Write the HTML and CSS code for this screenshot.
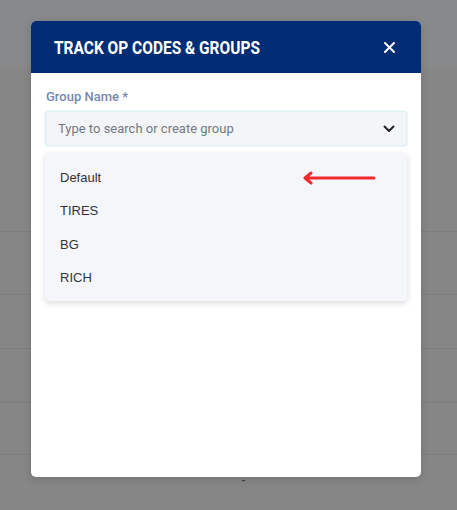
FILE: index.html
```html
<!DOCTYPE html>
<html lang="en">
<head>
    <meta charset="UTF-8">
    <meta name="viewport" content="width=device-width, initial-scale=1.0">
    <title>Track Op Codes &amp; Groups</title>
    <link rel="stylesheet" href="styles.css">
</head>
<body>
<div class="page">
    <div class="topbar"></div>
    <div class="rows">
        <div class="row row-first"></div>
        <div class="row"></div>
        <div class="row"></div>
        <div class="row"></div>
        <div class="row"><span class="cell-dash">-</span></div>
    </div>
</div>

<div class="modal">
    <div class="modal-header">
        <h2>TRACK OP CODES &amp; GROUPS</h2>
        <button class="close-btn" aria-label="Close">
            <svg width="11" height="11" viewBox="0 0 11 11">
                <path d="M1 1 L10 10 M10 1 L1 10" stroke="#fff" stroke-width="2" stroke-linecap="round"/>
            </svg>
        </button>
    </div>
    <div class="modal-body">
        <label for="group">Group Name *</label>
        <div class="select">
            <input type="text" id="group" placeholder="Type to search or create group">
            <svg class="chevron" width="12" height="8" viewBox="0 0 12 8">
                <path d="M1.5 1.5 L6 6 L10.5 1.5" fill="none" stroke="#222" stroke-width="2" stroke-linecap="round" stroke-linejoin="round"/>
            </svg>
        </div>
        <ul class="options">
            <li class="option">Default
                <svg class="pointer" width="74" height="14" viewBox="0 0 74 14">
                    <path d="M72 7 H4 M9 2 L3 7 L9 12" fill="none" stroke="#f22a2c" stroke-width="3" stroke-linecap="round" stroke-linejoin="round"/>
                </svg>
            </li>
            <li class="option">TIRES</li>
            <li class="option">BG</li>
            <li class="option">RICH</li>
        </ul>
    </div>
</div>
</body>
</html>
```

FILE: styles.css
```css
* {
    margin: 0;
    padding: 0;
    box-sizing: border-box;
}

body {
    font-family: 'Liberation Sans', Arial, sans-serif;
    background-color: #868686;
    color: #333;
    position: relative;
    min-height: 100vh;
    overflow: hidden;
}

.page {
    height: 510px;
}

.topbar {
    height: 67px;
    background-color: #88898b;
}

.rows {
    margin-top: 164px;
}

.row {
    height: 54px;
    border-top: 1px solid #7d7d7d;
    display: flex;
    justify-content: center;
    align-items: flex-end;
}

.row-first {
    height: 63px;
}

.row:nth-child(4) {
    height: 52px;
}

.cell-dash {
    font-size: 12px;
    line-height: 1;
    color: #3a3a3a;
    margin: 0 0 22px 30px;
}

.modal {
    position: absolute;
    top: 21px;
    left: 31px;
    width: 390px;
    height: 456px;
    background-color: #fff;
    border-radius: 5px;
    overflow: hidden;
    box-shadow: 0 2px 8px rgba(0, 0, 0, 0.15);
}

.modal-header {
    height: 52px;
    background-color: #022d75;
    display: flex;
    align-items: center;
    justify-content: space-between;
    padding: 0 26px 0 23px;
}

h2 {
    font-family: Roboto, sans-serif;
    font-size: 18px;
    font-weight: 700;
    color: #fff;
    white-space: nowrap;
    transform: scaleX(0.86);
    transform-origin: left center;
}

.close-btn {
    background: none;
    border: none;
    display: flex;
    cursor: pointer;
}

.modal-body {
    padding: 14px 14px;
}

label {
    display: block;
    font-family: Roboto, sans-serif;
    font-size: 13px;
    font-weight: 500;
    line-height: 20px;
    color: #7688ad;
    padding-left: 1px;
    margin-bottom: 4px;
}

.select {
    position: relative;
}

input {
    width: 100%;
    height: 35px;
    padding: 0 36px 0 12px;
    border: 1px solid #ddf1f1;
    border-radius: 3px;
    background-color: #f4f5f9;
    font-family: Roboto, sans-serif;
    font-size: 13px;
    color: #333;
    box-shadow: 0 0 0 1px rgba(221, 241, 241, 0.5);
}

input::placeholder {
    color: #75787e;
}

.chevron {
    position: absolute;
    right: 12px;
    top: 14px;
}

.options {
    list-style: none;
    margin-top: 7px;
    padding: 8px 0 7px;
    background-color: #f5f6fa;
    border-radius: 4px;
    box-shadow: 0 2px 6px rgba(0, 0, 0, 0.15);
}

.option {
    position: relative;
    height: 33.3px;
    line-height: 33px;
    padding-left: 15px;
    font-size: 13px;
    color: #333;
}

.pointer {
    position: absolute;
    left: 257px;
    top: 10px;
}
```
